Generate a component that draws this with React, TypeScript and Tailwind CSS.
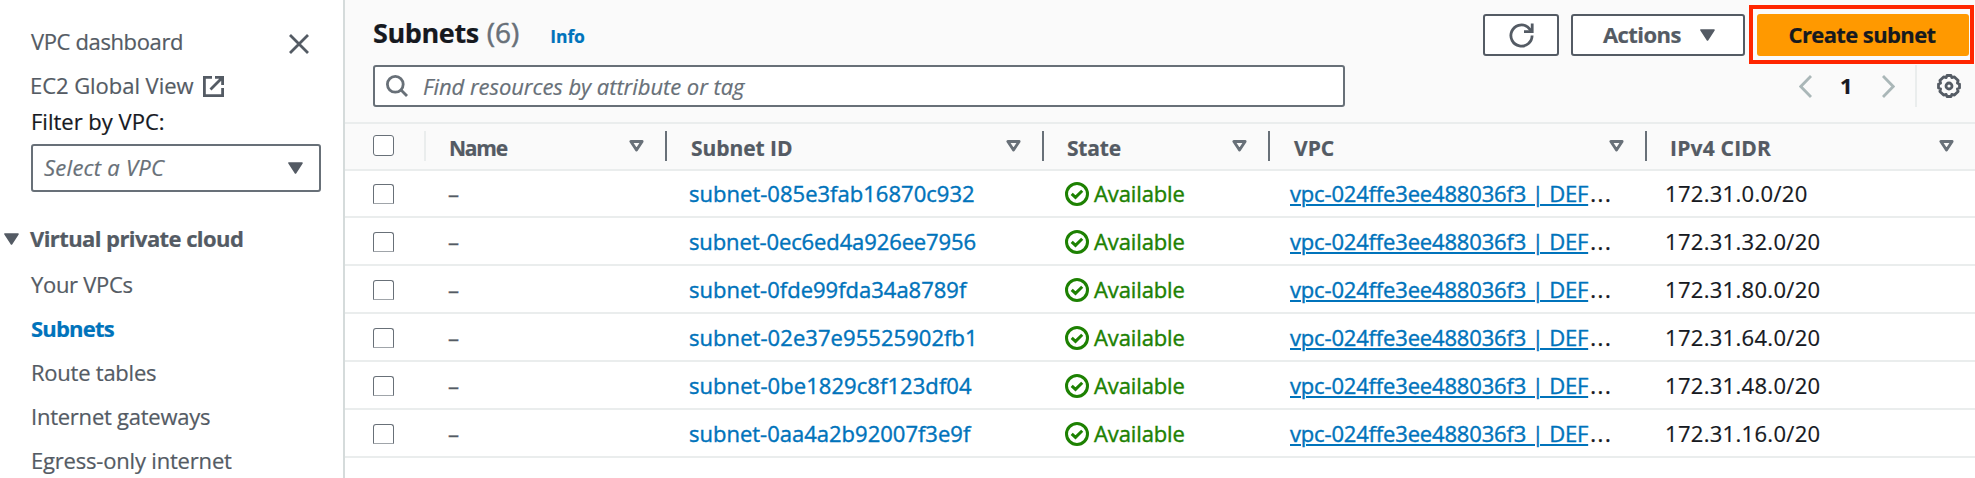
import React from "react";

const navItems = [
  { label: "Your VPCs", cls: "tracking-[-0.31px]" },
  { label: "Subnets", cls: "font-bold text-[#0073bb] tracking-[-0.8px]" },
  { label: "Route tables", cls: "tracking-[-0.24px]" },
  { label: "Internet gateways", cls: "tracking-[-0.24px]" },
  { label: "Egress-only internet", cls: "tracking-[-0.19px]" },
];

const columns = [
  { label: "Name", cls: "pl-[23px] pr-[21px] tracking-[-1.2px]" },
  { label: "Subnet ID", cls: "pl-[24px] pr-[21px] tracking-[-0.05px]" },
  { label: "State", cls: "pl-[23px] pr-[21px] tracking-[-0.2px]" },
  { label: "VPC", cls: "pl-[24px] pr-[21px]" },
  { label: "IPv4 CIDR", cls: "pl-[23px] pr-[21px] tracking-[0.2px]" },
];

const rows = [
  { id: "subnet-085e3fab16870c932", cidr: "172.31.0.0/20", cls: "tracking-[0.02px]" },
  { id: "subnet-0ec6ed4a926ee7956", cidr: "172.31.32.0/20", cls: "tracking-[-0.11px]" },
  { id: "subnet-0fde99fda34a8789f", cidr: "172.31.80.0/20", cls: "tracking-[0px]" },
  { id: "subnet-02e37e95525902fb1", cidr: "172.31.64.0/20", cls: "tracking-[0.06px]" },
  { id: "subnet-0be1829c8f123df04", cidr: "172.31.48.0/20", cls: "tracking-[0.06px]" },
  { id: "subnet-0aa4a2b92007f3e9f", cidr: "172.31.16.0/20", cls: "tracking-[0px]" },
];

const grid = "grid grid-cols-[81px_241px_377px_226px_377px_328px]";

function Caret({ className = "" }: { className?: string }) {
  return (
    <svg width="15" height="12" viewBox="0 0 15 12" className={`shrink-0 ${className}`}>
      <path d="M1 1H14L7.5 11Z" fill="#545b64" stroke="#545b64" strokeWidth="1.6" strokeLinejoin="round" />
    </svg>
  );
}

function SortIcon() {
  return (
    <svg width="15" height="12" viewBox="0 0 15 12" className="mb-[1px] shrink-0">
      <path d="M1.9 1.5H13.1L7.5 10Z" fill="none" stroke="#687078" strokeWidth="2.9" strokeLinejoin="round" />
    </svg>
  );
}

function Checkbox({ className = "" }: { className?: string }) {
  return <span className={`block w-[21px] rounded-[3px] border-[1.5px] border-[#687078] bg-white ${className}`} />;
}

function StatusIcon() {
  return (
    <svg width="24" height="24" viewBox="0 0 24 24" fill="none" stroke="#1d8102" strokeWidth="3" className="mt-[2px]">
      <circle cx="12" cy="12" r="10.5" />
      <path d="M6.7 11.8L10.5 15.4L17.2 8.8" />
    </svg>
  );
}

function GearIcon() {
  return (
    <svg width="24" height="24" viewBox="0 0 24 24" fill="none" stroke="#545b64" strokeWidth="2.8" strokeLinejoin="round">
      <path d="M10 1.5H14L14.8 3.6L17.4 2.9L21.1 6.6L20.4 9.2L22.5 10V14L20.4 14.8L21.1 17.4L17.4 21.1L14.8 20.4L14 22.5H10L9.2 20.4L6.6 21.1L2.9 17.4L3.6 14.8L1.5 14V10L3.6 9.2L2.9 6.6L6.6 2.9L9.2 3.6Z" />
      <circle cx="12" cy="12" r="3" strokeWidth="2.8" />
    </svg>
  );
}

function Sidebar() {
  return (
    <nav className="h-full w-[345px] shrink-0 overflow-hidden border-r-2 border-[#d5dbdb] bg-white pt-[19px] pl-[30px] leading-[44px] text-[#545b64]">
      <div className="flex h-[44px] justify-between pr-[34px]">
        <span className="pl-[1px] tracking-[-0.37px]">VPC dashboard</span>
        <svg width="20" height="20" viewBox="0 0 20 20" className="mt-[15px]">
          <path d="M1 1L19 19M19 1L1 19" stroke="#545b64" strokeWidth="2.8" />
        </svg>
      </div>
      <div className="flex h-[44px]">
        <span className="w-[173px] tracking-[-0.05px] whitespace-nowrap">EC2 Global View</span>
        <svg width="21" height="21" viewBox="0 0 21 21" className="mt-[13px]" fill="none" stroke="#545b64" strokeWidth="2.8">
          <path d="M9 1.4H1.4V19.6H19.6V12" />
          <path d="M12 1.4H19.6V9M19.2 1.8L7.5 13.5" />
        </svg>
      </div>
      <div className="h-[37px] pl-[1px] leading-[29px] text-[#16191f]">Filter by VPC:</div>
      <div className="ml-[1px] flex h-[48px] w-[290px] items-center justify-between rounded-[3px] border-2 border-[#687078] pr-[16px] pl-[11px]">
        <span className="pb-[2px] tracking-[0.26px] text-[#687078] italic">Select a VPC</span>
        <Caret />
      </div>
      <div className="mt-[25px] -ml-[26px] flex h-[44px] items-center font-bold">
        <Caret />
        <span className="pb-[2px] pl-[11px] tracking-[-0.58px]">Virtual private cloud</span>
      </div>
      <div className="mt-[1px]">
        {navItems.map((n) => (
          <div key={n.label} className={`pl-[1px] whitespace-nowrap ${n.cls}`}>
            {n.label}
          </div>
        ))}
      </div>
    </nav>
  );
}

function Toolbar() {
  return (
    <header className="h-[124px] border-b-2 border-[#eaeded] bg-[#fafafa] pl-[28px]">
      <div className="flex h-[65px] justify-between pr-[6px]">
        <h1 className="flex items-baseline pt-[8px] text-[27px] leading-[48px]">
          <span className="font-bold tracking-[-0.4px] text-[#16191f]">Subnets</span>
          <span className="pl-[8px] text-[28px] text-[#687078] [-webkit-text-stroke:0.5px]">(6)</span>
          <a className="pl-[31px] text-[17.5px] font-bold tracking-[-0.1px] text-[#0073bb]">Info</a>
        </h1>
        <div className="flex items-start pt-[14px] font-bold">
          <button className="flex h-[42px] w-[76px] items-center justify-center rounded-[3px] border-2 border-[#545b64] bg-white">
            <svg width="25" height="25" viewBox="0 0 25 25" fill="none" stroke="#545b64" strokeWidth="2.8" className="mt-[1px]">
              <path d="M23.1 12.5A10.6 10.6 0 1 1 18.5 3.8L22.5 8" />
              <path d="M23.2 0.5V8.6H15" />
            </svg>
          </button>
          <button className="ml-[12px] flex h-[42px] w-[174px] items-center justify-between rounded-[3px] border-2 border-[#545b64] bg-white pr-[28px] pl-[30px] text-[#545b64]">
            <span className="pb-[2px] tracking-[-0.56px]">Actions</span>
            <Caret />
          </button>
          <div className="relative ml-[12px] h-[42px]">
            <button className="h-[42px] w-[212px] rounded-[3px] bg-[#ff9900] pr-[2px] pb-[2px] tracking-[-0.61px] text-[#16191f]">Create subnet</button>
            <span className="absolute -top-[9px] -right-[5px] -bottom-[8px] -left-[8px] border-4 border-[#ff2600]" />
          </div>
        </div>
      </div>
      <div className="flex h-[42px] justify-between pr-[14px]">
        <div className="flex w-[972px] items-center rounded-[3px] border-2 border-[#687078] bg-white pl-[11px]">
          <svg width="22" height="22" viewBox="0 0 22 22" fill="none" stroke="#687078" strokeWidth="2.8">
            <circle cx="9.3" cy="9.3" r="7.9" />
            <path d="M14.8 14.8L21 21" />
          </svg>
          <span className="pl-[15px] tracking-[-0.05px] text-[#687078] italic">Find resources by attribute or tag</span>
        </div>
        <div className="flex items-center">
          <svg width="13" height="23" viewBox="0 0 13 23" fill="none" stroke="#aab7b8" strokeWidth="2.8">
            <path d="M12 1L1.8 11.5L12 22" />
          </svg>
          <span className="w-[70px] pb-[2px] pl-[28px] font-bold text-[#16191f]">1</span>
          <svg width="13" height="23" viewBox="0 0 13 23" fill="none" stroke="#aab7b8" strokeWidth="2.8">
            <path d="M1 1L11.2 11.5L1 22" />
          </svg>
          <span className="mr-[20px] ml-[20px] h-full w-[2px] bg-[#eaeded]" />
          <GearIcon />
        </div>
      </div>
    </header>
  );
}

function TableHeader() {
  return (
    <div className={`${grid} h-[47px] border-b-2 border-[#eaeded] bg-[#fafafa] text-[21px] font-bold text-[#545b64]`}>
      <div className="mt-[7px] h-[30px] border-r-2 border-[#eaeded] pt-[4px] pl-[28px]">
        <Checkbox className="h-[21px]" />
      </div>
      {columns.map((c, i) => (
        <div
          key={c.label}
          className={`mt-[7px] flex h-[30px] items-center justify-between ${i < 4 ? "border-r-2 border-[#687078]" : ""} ${c.cls}`}
        >
          <span className="pt-[4px]">{c.label}</span>
          <SortIcon />
        </div>
      ))}
    </div>
  );
}

export default function App() {
  return (
    <div className="flex h-[478px] w-[1975px] overflow-hidden bg-white font-['Open_Sans','Noto_Sans',sans-serif] text-[22px] leading-[30px] [-webkit-text-stroke:0.2px]">
      <Sidebar />
      <main className="w-[1630px]">
        <Toolbar />
        <TableHeader />
        {rows.map((r, i) => (
          <div
            key={r.id}
            className={`${grid} items-end border-b-2 border-[#eaeded] pb-[8px] [-webkit-text-stroke:0.4px] ${i === 0 ? "h-[47px]" : "h-[48px]"}`}
          >
            <div className="pb-[4px] pl-[28px]">
              <Checkbox className="h-[20px] rounded-b-[1px] border-b-[1px] border-b-[#a0a5aa]" />
            </div>
            <div className="pl-[22px] text-[#545b64]">–</div>
            <div className={`pl-[22px] text-[#0073bb] ${r.cls}`}>{r.id}</div>
            <div className="flex items-center pl-[21px] tracking-[-0.12px] text-[#1d8102]">
              <StatusIcon />
              <span className="pl-[5px]">Available</span>
            </div>
            <div className="flex pl-[20px] text-[#16191f]">
              <a className="tracking-[-0.17px] text-[#0073bb] underline decoration-[1.5px] underline-offset-[2px]">vpc-024ffe3ee488036f3 | DEF</a>
              <span className="pl-[2px] tracking-[1.6px]">...</span>
            </div>
            <div className="pl-[18px] tracking-[0.3px] text-[#16191f] [-webkit-text-stroke:0.2px]">{r.cidr}</div>
          </div>
        ))}
      </main>
    </div>
  );
}
